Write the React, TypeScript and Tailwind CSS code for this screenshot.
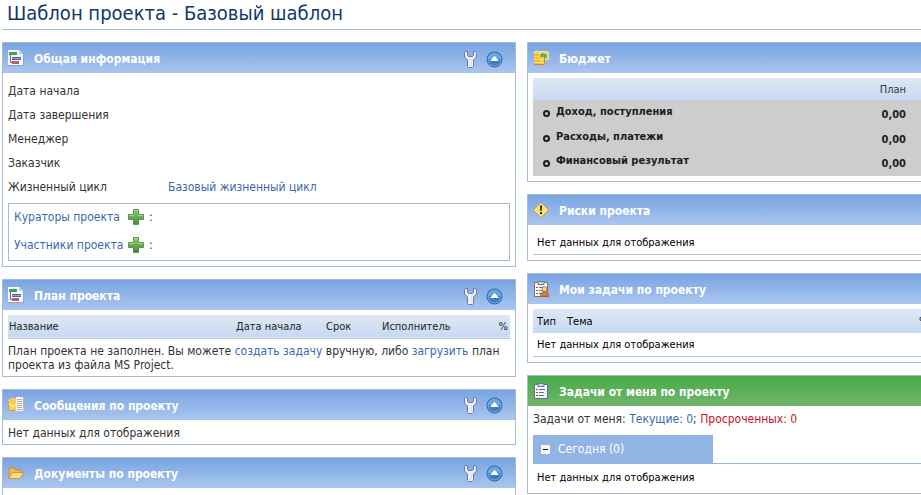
import React from 'react';
import clsx from 'clsx';

interface PanelProps {
  title: string;
  icon: React.ReactNode;
  green?: boolean;
  tools?: boolean;
  open?: boolean;
  className?: string;
  children?: React.ReactNode;
}

function GanttIcon() {
  return (
    <svg width="16" height="16" viewBox="0 0 16 16" aria-hidden="true">
      <path d="M0 0h11l4 4v11H0z" fill="#f8fbff" />
      <path d="M11 0v4h4z" fill="#b9cfec" />
      <path d="M0 15.500h15.500V4" fill="none" stroke="#8fa5c6" />
      <path d="M1 2h8v3H1z" fill="#46a24a" />
      <path d="M4 7h9v1H4zM4 9h9v1H4z" fill="#4766a0" />
      <path d="M4 8h9v1H4z" fill="#8ea6d4" />
      <path d="M2.500 5v7.500H4" stroke="#6a6d88" fill="none" />
      <path d="M4 11h7v3H4z" fill="#c55b60" />
    </svg>
  );
}

function MessagesIcon() {
  return (
    <svg width="16" height="16" viewBox="0 0 16 16" aria-hidden="true">
      <path d="M0 3l3-2h6v13H0z" fill="#f7cc55" />
      <path d="M0.500 4v9.500h7" fill="none" stroke="#d99a3c" />
      <path d="M1 6l4 4 3-3" fill="none" stroke="#fff0b0" strokeWidth="1.500" />
      <path d="M8 0h7v14H8z" fill="#fffdf2" stroke="#d8d4c0" strokeWidth="0.500" />
      <path d="M9 2.500h5M9 4.500h5M9 6.500h5M9 8.500h5M9 10.500h5M9 12.500h5" stroke="#b5aea0" />
    </svg>
  );
}

function FolderIcon() {
  return (
    <svg width="16" height="16" viewBox="0 0 16 16" aria-hidden="true">
      <path d="M1 13V3h5l1.500 2H13v3" fill="#f2bb55" stroke="#c98b2c" />
      <path d="M1 13.500L4 7.500h11.500l-3.500 6z" fill="#fddc8c" stroke="#d89633" />
    </svg>
  );
}

function MoneyIcon() {
  return (
    <svg width="16" height="16" viewBox="0 0 16 16" aria-hidden="true">
      <path d="M1.500 1.500h14v8h-14z" fill="#cfe08c" stroke="#f5e56a" />
      <circle cx="10" cy="6" r="2.200" fill="#7fae58" stroke="#5f8a50" />
      <path d="M13 4v4" stroke="#5f8a50" />
      <path d="M1 4h5v10H1z" fill="#f6b62c" />
      <path d="M6 7h5v7H6z" fill="#fccb45" />
      <path d="M1 6.500h5M1 9.500h10M1 12.500h10" stroke="#ffe078" />
      <path d="M1 14.500h10.500V8" stroke="#d58b1e" fill="none" />
    </svg>
  );
}

function WarningIcon() {
  return (
    <svg width="16" height="16" viewBox="0 0 16 16" aria-hidden="true">
      <path d="M8 0.500L15.500 8 8 15.500 0.500 8z" fill="#fbe06a" stroke="#c99a3c" strokeLinejoin="round" />
      <path d="M8 2L14 8 8 14 2 8z" fill="none" stroke="#fff2b4" />
      <path d="M7 3.500h2l-0.400 5.500H7.400zM7 10.200h2v2H7z" fill="#1c1a10" />
    </svg>
  );
}

function ClipboardIcon({ person = false }: { person?: boolean }) {
  return (
    <svg width="16" height="16" viewBox="0 0 16 16" aria-hidden="true">
      <path d="M1.500 1.500h13v14h-13z" fill="#f7f8fc" stroke={person ? '#8a6f68' : '#5f7090'} />
      <path d="M5 0.500h6v3H5z" fill="#d3d9e6" stroke="#6b7890" />
      <path d="M3 6.500h2M3 9.500h2M3 12.500h2" stroke="#b34a52" />
      <path d="M6 6.500h6M6 12.500h5" stroke="#566ea8" />
      <path d="M6 9.500h5" stroke="#4a9a55" />
      {person && (
        <>
          <circle cx="11.500" cy="8" r="2.500" fill="#f6cf95" stroke="#a05c2c" strokeWidth="0.700" />
          <path d="M7.500 15.500c0-4 2-5 4-5s4 1 4 5z" fill="#cf7d35" stroke="#a04a30" strokeWidth="0.700" />
        </>
      )}
    </svg>
  );
}

function WrenchIcon() {
  return (
    <svg width="14" height="17" viewBox="0 0 14 17" aria-hidden="true">
      <path
        d="M3.500 0.500H1.500L0.500 2v4L3.500 9v6.500l1 1h4l1-1V9l3-3V2l-1-1.500h-2v4L8.500 5.500h-4l-1-1z"
        fill="#eceffa"
        stroke="#667ba8"
        strokeLinejoin="round"
      />
      <path d="M7.500 8v7" stroke="#dde2f0" />
    </svg>
  );
}

function CollapseIcon() {
  return (
    <svg width="17" height="17" viewBox="0 0 17 17" aria-hidden="true">
      <circle cx="8.500" cy="8.500" r="7.500" fill="#3a7cc8" stroke="#235fa8" />
      <path d="M1.800 9a6.700 6.700 0 0 1 13.400 0c-3-2-10-2-13.400 0z" fill="#69a5e0" />
      <circle cx="8.500" cy="8.500" r="6.500" fill="none" stroke="#8fc0ee" strokeWidth="0.700" />
      <path d="M8.500 4.800L13 10H4z" fill="#fff" />
    </svg>
  );
}

function PlusIcon() {
  return (
    <svg width="16" height="16" viewBox="0 0 16 16" aria-hidden="true">
      <defs>
        <linearGradient id="plus" x1="0" y1="0" x2="0" y2="1">
          <stop offset="0" stopColor="#96cc78" />
          <stop offset="1" stopColor="#3d8a35" />
        </linearGradient>
      </defs>
      <path d="M5.500 0.500h5v5h5v5h-5v5h-5v-5h-5v-5h5z" fill="url(#plus)" stroke="#5f9455" />
      <path d="M6 1.500h4M1 6.500h5M10 6.500h5" stroke="#a9d692" />
    </svg>
  );
}

function Panel({ title, icon, green, tools, open, className, children }: PanelProps) {
  return (
    <section className={clsx('border-t border-l border-[#a3bdd6]', !open && 'border-r', className)}>
      <header
        className={clsx(
          'flex h-[30px] items-center bg-linear-to-b pr-3 pl-[5px]',
          green ? 'from-[#45aa47] to-[#70b56c]' : 'from-[#78a3e1] to-[#aac6ee]'
        )}
      >
        {icon}
        <h2 className="ml-[10px] flex-1 pt-0.5 text-[12px] leading-4 font-bold text-white">{title}</h2>
        {tools && (
          <div className="flex items-center gap-2 pt-0.5">
            <button type="button" aria-label="Настроить">
              <WrenchIcon />
            </button>
            <button type="button" aria-label="Свернуть">
              <CollapseIcon />
            </button>
          </div>
        )}
      </header>
      {children}
    </section>
  );
}

function Members({ label }: { label: string }) {
  return (
    <div className="flex h-7 items-center pb-0.5">
      <a href="#" className="w-[114px] whitespace-nowrap text-[#3b68b5]">
        {label}
      </a>
      <button type="button" aria-label="Добавить">
        <PlusIcon />
      </button>
      <span className="ml-[5px]">:</span>
    </div>
  );
}

const fields = ['Дата начала', 'Дата завершения', 'Менеджер', 'Заказчик'];
const budget = ['Доход, поступления', 'Расходы, платежи', 'Финансовый результат'];

export default function App() {
  return (
    <div className="h-screen overflow-hidden bg-white pl-0.5 font-['DejaVu_Sans_Condensed','DejaVu_Sans',sans-serif] text-[12px] leading-[14px] text-[#333]">
      <h1 className="h-[30px] border-b border-[#a3bdd6] pl-[5px] text-[20px] leading-[26px] text-[#10396b]">
        Шаблон проекта - Базовый шаблон
      </h1>

      <main className="mt-3 grid grid-cols-[514fr_394fr] items-start gap-x-[11px]">
        <div className="flex min-w-0 flex-col gap-3">
          <Panel title="Общая информация" icon={<GanttIcon />} tools className="border-b">
            <div className="px-[5px] pt-1.5 pb-[5px]">
              <dl>
                {fields.map((field) => (
                  <div key={field} className="flex h-6 items-center">
                    <dt className="w-40">{field}</dt>
                    <dd />
                  </div>
                ))}
                <div className="flex h-6 items-center">
                  <dt className="w-40">Жизненный цикл</dt>
                  <dd>
                    <a href="#" className="text-[#3b68b5]">
                      Базовый жизненный цикл
                    </a>
                  </dd>
                </div>
              </dl>
              <div className="mt-1 border border-[#a3bdd6] px-[5px]">
                <Members label="Кураторы проекта" />
                <Members label="Участники проекта" />
              </div>
            </div>
          </Panel>

          <Panel title="План проекта" icon={<GanttIcon />} tools className="border-b">
            <div className="px-[5px] pt-[5px] pb-1">
              <table className="w-full table-fixed text-left text-[11px] text-[#222]">
                <thead>
                  <tr className="h-[23px] border-b border-[#b9c6d4] bg-linear-to-b from-[#dfe8f5] to-[#c6d9f2]">
                    <th className="w-[228px] pt-0.5 pl-px font-normal">Название</th>
                    <th className="w-[90px] pt-0.5 font-normal">Дата начала</th>
                    <th className="w-14 pt-0.5 font-normal">Срок</th>
                    <th className="pt-0.5 font-normal">Исполнитель</th>
                    <th className="w-8 pt-0.5 pr-0.5 text-right font-normal">%</th>
                  </tr>
                </thead>
              </table>
              <p className="pt-[5px]">
                План проекта не заполнен. Вы можете{' '}
                <a href="#" className="text-[#3b68b5]">
                  создать задачу
                </a>{' '}
                вручную, либо{' '}
                <a href="#" className="text-[#3b68b5]">
                  загрузить
                </a>{' '}
                план проекта из файла MS Project.
              </p>
            </div>
          </Panel>

          <Panel title="Сообщения по проекту" icon={<MessagesIcon />} tools className="border-b">
            <p className="px-[5px] pt-1.5 pb-1">Нет данных для отображения</p>
          </Panel>

          <Panel title="Документы по проекту" icon={<FolderIcon />} tools>
            <div className="h-6" />
          </Panel>
        </div>

        <div className="flex min-w-0 flex-col gap-3">
          <Panel title="Бюджет" icon={<MoneyIcon />} open className="border-b">
            <div className="pt-[5px] pb-[5px] pl-[5px]">
              <table className="w-full border-b border-[#cdcdcd]">
                <thead>
                  <tr className="h-[22px] bg-linear-to-b from-[#dfe8f5] to-[#c6d9f2] text-[11px]">
                    <th aria-label="Статья" />
                    <th className="pt-0.5 pr-[15px] text-right font-normal">План</th>
                  </tr>
                </thead>
                <tbody className="bg-[#cdcdcd] text-[11px] text-[#1c1c1c]">
                  {budget.map((row) => (
                    <tr key={row} className="h-[25px]">
                      <th className="pb-0.5 pl-[10px] text-left">
                        <span className="flex items-center gap-1.5">
                          <span className="mt-1 size-[7px] rounded-full border-2 border-[#1c1c1c]" />
                          {row}
                        </span>
                      </th>
                      <td className="pt-1 pr-[15px] text-right font-bold">0,00</td>
                    </tr>
                  ))}
                </tbody>
              </table>
            </div>
          </Panel>

          <Panel title="Риски проекта" icon={<WarningIcon />} open className="border-b">
            <div className="pb-[5px] pl-[5px]">
              <p className="border-b border-[#b9c6d4] pt-[11px] pb-1 pl-1 text-[11px] text-black">
                Нет данных для отображения
              </p>
            </div>
          </Panel>

          <Panel title="Мои задачи по проекту" icon={<ClipboardIcon person />} open className="border-b">
            <div className="pt-[5px] pb-[5px] pl-[5px]">
              <table className="w-full table-fixed text-left text-[11px] text-black">
                <thead>
                  <tr className="h-6 bg-linear-to-b from-[#dfe8f5] to-[#c6d9f2]">
                    <th className="w-[34px] pt-0.5 pl-1 font-normal">Тип</th>
                    <th className="pt-0.5 font-normal">Тема</th>
                    <th className="w-0.5 overflow-hidden pt-0.5 font-normal">%</th>
                  </tr>
                </thead>
                <tbody>
                  <tr className="h-6 border-b border-[#b9c6d4]">
                    <td colSpan={3} className="pt-0.5 pl-1">
                      Нет данных для отображения
                    </td>
                  </tr>
                </tbody>
              </table>
            </div>
          </Panel>

          <Panel title="Задачи от меня по проекту" icon={<ClipboardIcon />} green open className="border-b">
            <div className="pt-1.5 pb-2 pl-[5px]">
              <p>
                Задачи от меня:{' '}
                <a href="#" className="text-[#3b68b5]">
                  Текущие: 0
                </a>
                ;{' '}
                <a href="#" className="text-[#cc1122]">
                  Просроченных: 0
                </a>
              </p>
              <div className="mt-[9px] border-b border-[#92b4e4]">
                <button type="button" className="flex h-7 w-[180px] items-center bg-[#92b4e4] pl-2 text-white">
                  <svg width="9" height="9" viewBox="0 0 9 9" aria-hidden="true">
                    <path d="M0 0h9v9H0z" fill="#f6f6f4" />
                    <path d="M2 4.500h5" stroke="#222" />
                  </svg>
                  <span className="ml-2">Сегодня (0)</span>
                </button>
              </div>
              <p className="pt-[7px] pl-1 text-[11px] text-black">Нет данных для отображения</p>
            </div>
          </Panel>
        </div>
      </main>
    </div>
  );
}
